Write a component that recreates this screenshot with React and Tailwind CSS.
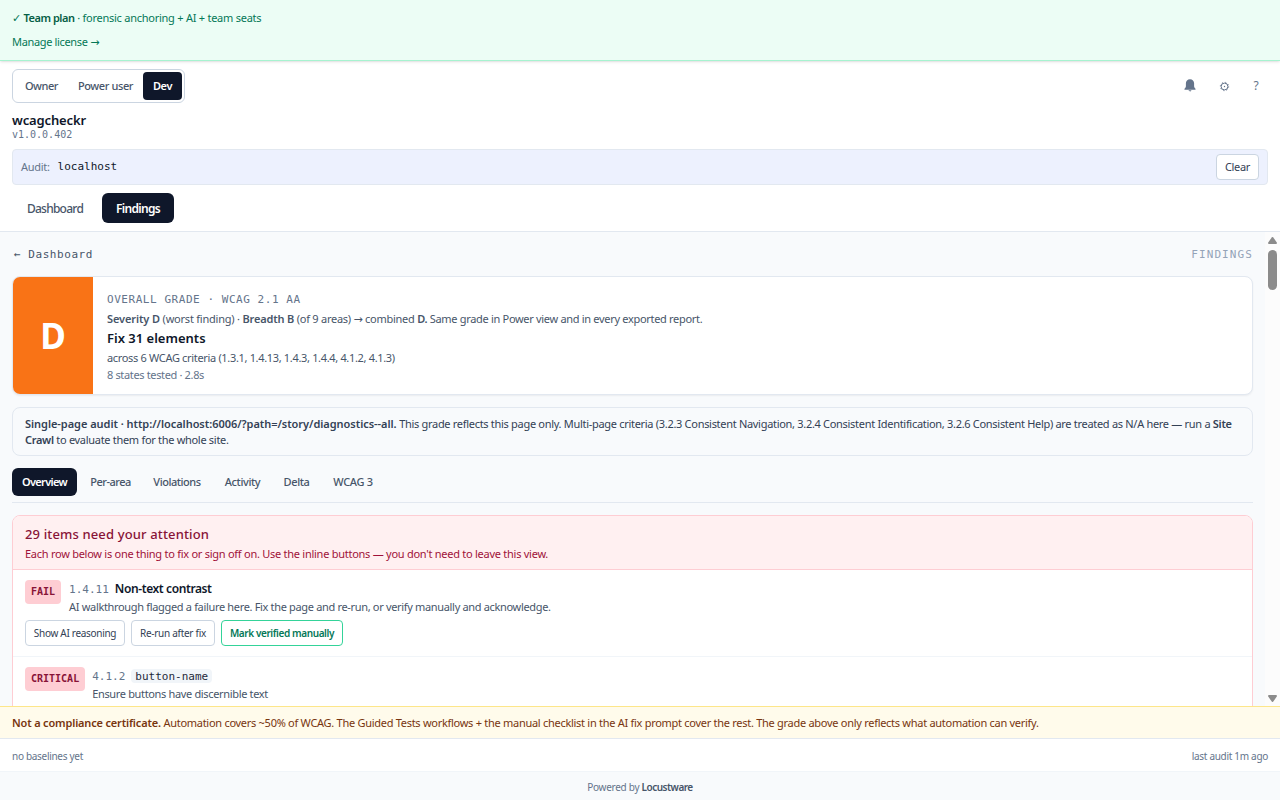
import React from "react";

const modes = [
    { label: "Owner", style: "w-[53px] font-medium text-[#475569] tracking-[-0.45px]" },
    { label: "Power user", style: "w-[75px] font-medium text-[#475569] tracking-[-0.4px]" },
    { label: "Dev", style: "w-[39px] rounded bg-[#0f172a] font-semibold text-white tracking-[-0.4px]" },
];

const tabs = [
    { label: "Overview", style: "w-[65px] rounded-md bg-[#0f172a] font-semibold text-white tracking-[-0.65px]" },
    { label: "Per-area", style: "w-[59px] font-medium text-[#475569] tracking-[-0.5px]" },
    { label: "Violations", style: "w-[67px] pr-px font-medium text-[#475569] tracking-[-0.45px]" },
    { label: "Activity", style: "w-[55px] font-medium text-[#475569] tracking-[-0.4px]" },
    { label: "Delta", style: "w-[45px] font-medium text-[#475569] tracking-[-0.4px]" },
    { label: "WCAG 3", style: "w-[60px] font-medium text-[#475569] tracking-[-0.3px]" },
];

function LicenseBanner() {
    return (
        <div className="relative z-10 flex h-[61px] shrink-0 flex-col gap-2 border-b border-[#a7f3d0] bg-[#ecfdf5] px-3 pt-2.5 text-[11px] leading-4 tracking-[-0.25px] text-[#047857] shadow-sm">
            <p>
                ✓ <span className="font-semibold tracking-[-0.45px] text-[#065f46]">Team plan</span> · forensic
                anchoring + AI + team seats
            </p>
            <p className="tracking-[-0.34px]">
                Manage license <Arrow />
            </p>
        </div>
    );
}

function Arrow() {
    return <span className="font-['DejaVu_Sans',sans-serif] leading-3">→</span>;
}

function Header() {
    return (
        <header className="h-[171px] shrink-0 border-b border-[#e2e8f0] bg-white px-3 pt-2">
            <div className="flex items-center justify-between">
                <div className="flex h-[34px] items-center rounded-md border border-[#cbd5e1] p-0.5 text-[11px]">
                    {modes.map((m) => (
                        <button key={m.label} className={`h-7 whitespace-nowrap ${m.style}`}>
                            {m.label}
                        </button>
                    ))}
                </div>
                <div className="-mr-1 flex items-center text-[#64748b]">
                    <button className="flex h-7 w-9 items-center justify-center pb-px">
                        <svg width="12" height="13" viewBox="0 0 12 13" fill="currentColor">
                            <path d="M6 .2C3.500.2 1.900 2 1.900 4.300v2.900c0 .8-.3 1.400-.9 2-.9.8-.7 1.600.1 1.600h9.800c.8 0 1-.8.1-1.600-.6-.6-.9-1.200-.9-2V4.300C10.100 2 8.500.2 6 .2ZM4.600 11.200h2.800c-.1.8-.7 1.200-1.400 1.200s-1.300-.4-1.400-1.200Z" />
                        </svg>
                    </button>
                    <button className="flex h-7 w-8 items-center justify-center">
                        <svg width="11" height="11" viewBox="0 0 11 11" fill="none" stroke="currentColor">
                            <circle cx="5.500" cy="5.500" r="3.400" />
                            <circle cx="5.500" cy="5.500" r="4.200" strokeWidth="0.8" strokeDasharray="1.300 1.999" />
                            <circle cx="5.500" cy="5.500" r=".7" fill="currentColor" stroke="none" />
                        </svg>
                    </button>
                    <button className="h-7 w-8 text-[12px]">?</button>
                </div>
            </div>

            <h1 className="mt-2 text-[13px] font-semibold leading-[18px] tracking-[-0.13px] text-[#0f172a]">
                wcagcheckr
            </h1>
            <p className="font-['DejaVu_Sans_Mono',monospace] text-[10px] leading-3 text-[#64748b]">v1.0.0.402</p>

            <div className="mt-2 flex h-9 items-center rounded border border-[#e2e8f0] bg-[#edf1fe] px-2 text-[11px]">
                <span className="tracking-[-0.3px] text-[#64748b]">Audit:</span>
                <span className="ml-2 pt-px font-['DejaVu_Sans_Mono',monospace] text-[#0f172a]">localhost</span>
                <button className="ml-auto h-[26px] w-[43px] rounded border border-[#cbd5e1] bg-white tracking-[-0.34px] text-[#334155]">
                    Clear
                </button>
            </div>

            <nav className="mt-2 flex gap-1 text-[12px]">
                <button className="h-[30px] w-[86px] pt-0.5 font-medium tracking-[-0.75px] text-[#475569]">
                    Dashboard
                </button>
                <button className="h-[30px] w-[72px] rounded-md bg-[#0f172a] pt-0.5 font-semibold tracking-[-0.69px] text-white">
                    Findings
                </button>
            </nav>
        </header>
    );
}

function GradeCard() {
    return (
        <section className="mt-[13px] flex h-[119px] overflow-hidden rounded-lg border border-[#e2e8f0] bg-white shadow-[0_1px_2px_rgba(15,23,42,0.06)]">
            <div className="flex w-20 items-center justify-center bg-[#f97316] pt-0.5 text-[35px] font-bold text-white">
                D
            </div>
            <div className="px-3.5 pt-3.5 text-[11px] leading-4 text-[#475569]">
                <p className="font-['DejaVu_Sans_Mono',monospace] tracking-[0.55px] leading-[17px] text-[#64748b]">
                    OVERALL GRADE · WCAG 2.1 AA
                </p>
                <p className="mt-[3px] tracking-[-0.31px]">
                    <b className="font-semibold tracking-[-0.1px]">Severity D</b>{" "}
                    <span className="tracking-[-0.22px]">(worst finding) · </span>
                    <b className="font-semibold tracking-[-0.15px]">Breadth B</b>{" "}
                    <span className="tracking-[-0.26px]">
                        (of 9 areas) <Arrow /> combined{" "}
                    </span>
                    <b className="font-semibold">D.</b> Same grade in Power view and in every exported report.
                </p>
                <h2 className="mt-0.5 text-[13px] font-semibold leading-[18px] text-[#0f172a]">Fix 31 elements</h2>
                <p className="mt-[3px] tracking-[-0.33px]">
                    across 6 WCAG criteria (1.3.1, 1.4.13, 1.4.3, 1.4.4, 4.1.2, 4.1.3)
                </p>
                <p className="mt-px tracking-[-0.35px] text-[#64748b]">8 states tested · 2.8s</p>
            </div>
        </section>
    );
}

function Attention() {
    return (
        <section className="mt-3 rounded-t-lg border border-[#fecdd3] bg-white">
            <div className="h-[54px] rounded-t-[7px] border-b border-[#fecdd3] bg-[#fff0f1] px-3 pt-[9px]">
                <h2 className="text-[13px] font-medium leading-[18px] tracking-[0.14px] text-[#881337]">
                    29 items need your attention
                </h2>
                <p className="mt-[3px] text-[11px] leading-4 tracking-[-0.26px] text-[#9f1239]">
                    Each row below is one thing to fix or sign off on. Use the inline buttons — you don't need to leave
                    this view.
                </p>
            </div>

            <div className="h-[87px] border-b border-[#f1f5f9] px-3 pt-2.5">
                <div className="flex gap-2">
                    <span className="h-6 rounded bg-[#fecdd3] px-1.5 font-['DejaVu_Sans_Mono',monospace] text-[10px] font-bold leading-6 text-[#881337]">
                        FAIL
                    </span>
                    <div className="text-[11px] text-[#475569]">
                        <p className="flex gap-1.5 leading-[18px]">
                            <span className="pt-px font-['DejaVu_Sans_Mono',monospace] leading-[17px] text-[#64748b]">
                                1.4.11
                            </span>
                            <b className="text-[12px] font-semibold tracking-[-0.4px] text-[#0f172a]">
                                Non-text contrast
                            </b>
                        </p>
                        <p className="mt-px leading-4 tracking-[-0.33px]">
                            AI walkthrough flagged a failure here. Fix the page and re-run, or verify manually and
                            acknowledge.
                        </p>
                    </div>
                </div>
                <div className="mt-[5px] flex gap-1.5 text-[10px] text-[#334155]">
                    <button className="h-[26px] w-[100px] rounded border border-[#cbd5e1] tracking-[-0.3px]">
                        Show AI reasoning
                    </button>
                    <button className="h-[26px] w-[84px] rounded border border-[#cbd5e1] tracking-[-0.28px]">
                        Re-run after fix
                    </button>
                    <button className="h-[26px] w-[122px] rounded border border-[#34d399] font-semibold tracking-[-0.4px] text-[#047857]">
                        Mark verified manually
                    </button>
                </div>
            </div>

            <div className="h-[87px] px-3 pt-2.5">
                <div className="flex gap-2">
                    <span className="h-6 rounded bg-[#fecdd3] px-1.5 font-['DejaVu_Sans_Mono',monospace] text-[10px] font-bold leading-6 text-[#881337]">
                        CRITICAL
                    </span>
                    <div className="-ml-px text-[11px] text-[#475569]">
                        <p className="flex h-[18px] items-center gap-1.5 font-['DejaVu_Sans_Mono',monospace] leading-[14px]">
                            <span className="pt-px text-[#64748b]">4.1.2</span>
                            <code className="rounded bg-[#f1f5f9] px-1 pt-px font-['DejaVu_Sans_Mono',monospace] leading-[13px] text-[#1e293b]">
                                button-name
                            </code>
                        </p>
                        <p className="mt-px leading-4 tracking-[-0.34px]">Ensure buttons have discernible text</p>
                    </div>
                </div>
            </div>
        </section>
    );
}

function Scrollbar() {
    return (
        <div className="flex w-[15px] shrink-0 flex-col items-center justify-between bg-[#fcfcfc] pt-[5px] pb-1 text-[#8b8b8b]">
            <div className="flex flex-col items-center gap-1.5">
                <svg width="9" height="7" viewBox="0 0 9 7" fill="currentColor">
                    <path d="M3.700.5a1 1 0 0 1 1.600 0L8.800 5.600A.9.900 0 0 1 8.100 7H.9A.9.900 0 0 1 .2 5.600Z" />
                </svg>
                <div className="h-10 w-[9px] rounded-full bg-[#8b8b8b]" />
            </div>
            <svg width="9" height="7" viewBox="0 0 9 7" fill="currentColor">
                <path d="M3.700 6.500a1 1 0 0 0 1.600 0L8.800 1.400A.9.900 0 0 0 8.100 0H.9A.9.900 0 0 0 .2 1.400Z" />
            </svg>
        </div>
    );
}

export default function App() {
    return (
        <div className="flex h-[800px] w-[1280px] flex-col overflow-hidden bg-white font-['Noto_Sans',sans-serif]">
            <LicenseBanner />
            <Header />

            <div className="flex min-h-0 flex-1 bg-[#f8fafc]">
                <main className="min-w-0 flex-1 overflow-hidden px-3 pt-3.5">
                    <div className="flex justify-between font-['DejaVu_Sans_Mono',monospace] text-[11px] leading-[17px]">
                        <a className="pl-0.5 tracking-[0.55px] text-[#475569]">← Dashboard</a>
                        <span className="tracking-[1.1px] text-[#94a3b8]">FINDINGS</span>
                    </div>

                    <GradeCard />

                    <section className="mt-3 h-[49px] rounded-lg border border-[#e2e8f0] px-3 pt-2 text-[11px] leading-4 tracking-[-0.3px] text-[#334155]">
                        <b className="font-semibold tracking-[-0.04px]">
                            Single-page audit · http://localhost:6006/?path=/story/diagnostics--all.
                        </b>{" "}
                        This grade reflects this page only. Multi-page criteria (3.2.3 Consistent Navigation, 3.2.4
                        Consistent Identification, 3.2.6 Consistent Help) are treated as N/A here — run a{" "}
                        <b className="font-semibold">Site</b> <b className="font-semibold">Crawl</b> to evaluate them
                        for the whole site.
                    </section>

                    <nav className="mt-3 flex h-[35px] gap-1 border-b border-[#e2e8f0] text-[11px]">
                        {tabs.map((t) => (
                            <button key={t.label} className={`h-7 whitespace-nowrap ${t.style}`}>
                                {t.label}
                            </button>
                        ))}
                    </nav>

                    <Attention />
                </main>
                <Scrollbar />
            </div>

            <div className="h-8 shrink-0 border-t border-[#fde68a] bg-[#fffbeb] px-3 pt-2 text-[11px] leading-4 tracking-[-0.28px] text-[#78350f]">
                <b className="font-semibold tracking-[-0.17px]">Not a compliance certificate.</b> Automation covers
                ~50% of WCAG. The Guided Tests workflows + the manual checklist in the AI fix prompt cover the rest.
                The grade above only reflects what automation can verify.
            </div>
            <div className="flex h-[33px] shrink-0 items-center justify-between border-t border-[#e2e8f0] bg-white px-3 pt-0.5 text-[10px] tracking-[-0.3px] text-[#64748b]">
                <span>no baselines yet</span>
                <span>last audit 1m ago</span>
            </div>
            <footer className="h-[29px] shrink-0 border-t border-[#f1f5f9] bg-[#f8fafc] pt-[7px] text-center text-[10px] leading-4 tracking-[-0.28px] text-[#64748b]">
                Powered by <b className="font-semibold tracking-[-0.5px] text-[#475569]">Locustware</b>
            </footer>
        </div>
    );
}
